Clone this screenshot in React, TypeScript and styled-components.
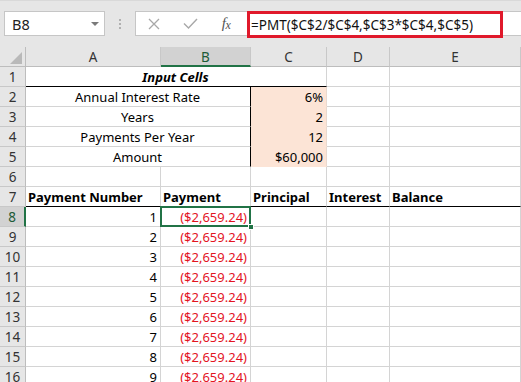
import React from "react";
import styled, { createGlobalStyle, css } from "styled-components";

const GlobalStyle = createGlobalStyle`
  html, body { margin: 0; padding: 0; background: #ffffff; overflow: hidden; }
  body { font-family: "Noto Sans", "Open Sans", sans-serif; }
  * { box-sizing: border-box; }
`;

const GRID = "#d4d4d4";
const GREEN = "#217346";
const PEACH = "#fce4d6";
const RED = "#e3141f";

const Window = styled.div`
  width: 521px;
  height: 382px;
  overflow: hidden;
  display: flex;
  flex-direction: column;
`;

const Toolbar = styled.div`
  height: 47px;
  flex: none;
  background: #e6e6e6;
  border-top: 1px solid #d9d9d9;
  display: flex;
  align-items: flex-start;
  padding-top: 10px;
`;

const NameBox = styled.div`
  margin-left: 4px;
  width: 101px;
  height: 25px;
  background: #fff;
  border: 1px solid #c6c6c6;
  display: flex;
  align-items: center;
  justify-content: space-between;
  padding: 0 5px 0 7px;
  font-size: 14.5px;
  color: #222;
`;

const Caret = styled.span`
  width: 0;
  height: 0;
  border-left: 4px solid transparent;
  border-right: 4px solid transparent;
  border-top: 4px solid #7a7a7a;
`;

const Grip = styled.div`
  width: 30px;
  height: 25px;
  display: flex;
  flex-direction: column;
  align-items: center;
  justify-content: center;
  gap: 2px;
`;

const Dot = styled.span`
  width: 2px;
  height: 2px;
  background: #b0b0b0;
`;

const FormulaBox = styled.div`
  flex: 1;
  height: 25px;
  background: #fff;
  border: 1px solid #c6c6c6;
  border-right: none;
  display: flex;
  align-items: center;
`;

const IconSlot = styled.div`
  width: 36px;
  height: 23px;
  flex: none;
  display: flex;
  align-items: center;
  justify-content: center;
`;

const Fx = styled.span`
  font-family: "Liberation Serif", "DejaVu Serif", serif;
  font-style: italic;
  font-size: 15px;
  color: #555;
  letter-spacing: -0.5px;
  line-height: 1;
  & > sub {
    font-size: 12px;
    vertical-align: baseline;
    position: relative;
    top: 1px;
  }
`;

const FormulaText = styled.div`
  margin-left: 3px;
  margin-top: -1px;
  align-self: flex-start;
  width: 256px;
  height: 27px;
  border: 3px solid #e0192b;
  display: flex;
  align-items: center;
  padding-left: 1px;
  font-size: 13.5px;
  color: #111;
  white-space: nowrap;
`;

const Sheet = styled.div`
  display: grid;
  grid-template-columns: 26px 135px 90px 76px 63px 1fr;
  grid-template-rows: 20px;
  grid-auto-rows: 20px;
  font-size: 13px;
  color: #000;
`;

const Corner = styled.div`
  background: #e6e6e6;
  border-right: 1px solid #bdbdbd;
  border-bottom: 1px solid #bdbdbd;
  display: flex;
  align-items: flex-end;
  justify-content: flex-end;
  padding: 0 3px 2px 0;
`;

const Triangle = styled.span`
  width: 0;
  height: 0;
  border-left: 12px solid transparent;
  border-bottom: 12px solid #b9b9b9;
`;

const ColHead = styled.div<{ $sel?: boolean }>`
  background: ${(p) => (p.$sel ? "#d2d2d2" : "#e6e6e6")};
  border-right: 1px solid #c8c8c8;
  border-bottom: ${(p) => (p.$sel ? `2px solid ${GREEN}` : "1px solid #bdbdbd")};
  color: ${(p) => (p.$sel ? "#1d5c38" : "#333")};
  font-size: 13.5px;
  display: flex;
  align-items: center;
  justify-content: center;
  padding-top: ${(p) => (p.$sel ? "1px" : "0")};
`;

const RowHead = styled.div<{ $sel?: boolean }>`
  background: ${(p) => (p.$sel ? "#d2d2d2" : "#e6e6e6")};
  border-right: ${(p) => (p.$sel ? `2px solid ${GREEN}` : "1px solid #bdbdbd")};
  border-bottom: 1px solid #c8c8c8;
  color: ${(p) => (p.$sel ? "#1d5c38" : "#333")};
  font-size: 13.5px;
  display: flex;
  align-items: center;
  justify-content: center;
  padding-top: 1px;
`;

type Align = "left" | "right" | "center";

const Cell = styled.div<{
  $align?: Align;
  $bold?: boolean;
  $italic?: boolean;
  $fill?: string;
  $color?: string;
  $span?: number;
  $bottom?: string;
  $right?: string;
  $sel?: boolean;
}>`
  position: relative;
  grid-column: span ${(p) => p.$span ?? 1};
  background: ${(p) => p.$fill ?? "#fff"};
  border-right: 1px solid ${(p) => p.$right ?? GRID};
  border-bottom: 1px solid ${(p) => p.$bottom ?? GRID};
  color: ${(p) => p.$color ?? "#000"};
  font-weight: ${(p) => (p.$bold ? 700 : 400)};
  font-style: ${(p) => (p.$italic ? "italic" : "normal")};
  display: flex;
  align-items: center;
  justify-content: ${(p) =>
    p.$align === "right" ? "flex-end" : p.$align === "center" ? "center" : "flex-start"};
  padding: 1px 3px 0 2px;
  white-space: nowrap;
  ${(p) =>
    p.$sel &&
    css`
      &::after {
        content: "";
        position: absolute;
        top: -1px;
        left: -1px;
        right: -1px;
        bottom: -1px;
        border: 2px solid ${GREEN};
        pointer-events: none;
      }
    `}
`;

const FillHandle = styled.span`
  position: absolute;
  right: -4px;
  bottom: -4px;
  width: 6px;
  height: 6px;
  background: ${GREEN};
  border: 1px solid #fff;
  z-index: 2;
`;

const CloseIcon = () => (
  <svg width="12" height="12" viewBox="0 0 12 12">
    <path d="M1 1 L11 11 M11 1 L1 11" stroke="#a8a8a8" strokeWidth="1.3" fill="none" />
  </svg>
);

const CheckIcon = () => (
  <svg width="15" height="11" viewBox="0 0 15 11">
    <path d="M1 5.5 L5.5 10 L14 1" stroke="#a8a8a8" strokeWidth="1.4" fill="none" />
  </svg>
);

const inputs: [string, string][] = [
  ["Annual Interest Rate", "6%"],
  ["Years", "2"],
  ["Payments Per Year", "12"],
  ["Amount", "$60,000"],
];

const Empty = () => (
  <>
    <Cell />
    <Cell />
  </>
);

export default function App() {
  const payRows = [1, 2, 3, 4, 5, 6, 7, 8, 9];
  return (
    <Window>
      <GlobalStyle />
      <Toolbar>
        <NameBox>
          <span>B8</span>
          <Caret />
        </NameBox>
        <Grip>
          <Dot />
          <Dot />
          <Dot />
        </Grip>
        <FormulaBox>
          <IconSlot>
            <CloseIcon />
          </IconSlot>
          <IconSlot>
            <CheckIcon />
          </IconSlot>
          <IconSlot>
            <Fx>
              f<sub>x</sub>
            </Fx>
          </IconSlot>
          <FormulaText>=PMT($C$2/$C$4,$C$3*$C$4,$C$5)</FormulaText>
        </FormulaBox>
      </Toolbar>
      <Sheet>
        <Corner>
          <Triangle />
        </Corner>
        <ColHead>A</ColHead>
        <ColHead $sel>B</ColHead>
        <ColHead>C</ColHead>
        <ColHead>D</ColHead>
        <ColHead>E</ColHead>

        <RowHead>1</RowHead>
        <Cell $span={3} $align="center" $bold $italic $bottom="#000">
          Input Cells
        </Cell>
        <Empty />

        {inputs.map(([label, value], i) => (
          <React.Fragment key={label}>
            <RowHead>{i + 2}</RowHead>
            <Cell $span={2} $align="center" $right="#000">
              {label}
            </Cell>
            <Cell $align="right" $fill={PEACH} $bottom={PEACH} $right="#e9d9cf">
              {value}
            </Cell>
            <Empty />
          </React.Fragment>
        ))}

        <RowHead>6</RowHead>
        <Cell />
        <Cell />
        <Cell />
        <Empty />

        <RowHead>7</RowHead>
        <Cell $bold $bottom="#000">Payment Number</Cell>
        <Cell $bold $bottom="#000">Payment</Cell>
        <Cell $bold $bottom="#000">Principal</Cell>
        <Cell $bold $bottom="#000">Interest</Cell>
        <Cell $bold $bottom="#000">Balance</Cell>

        {payRows.map((n) => (
          <React.Fragment key={n}>
            <RowHead $sel={n === 1}>{n + 7}</RowHead>
            <Cell $align="right">{n}</Cell>
            <Cell $align="right" $color={RED} $sel={n === 1}>
              ($2,659.24)
              {n === 1 && <FillHandle />}
            </Cell>
            <Cell />
            <Empty />
          </React.Fragment>
        ))}
      </Sheet>
    </Window>
  );
}
